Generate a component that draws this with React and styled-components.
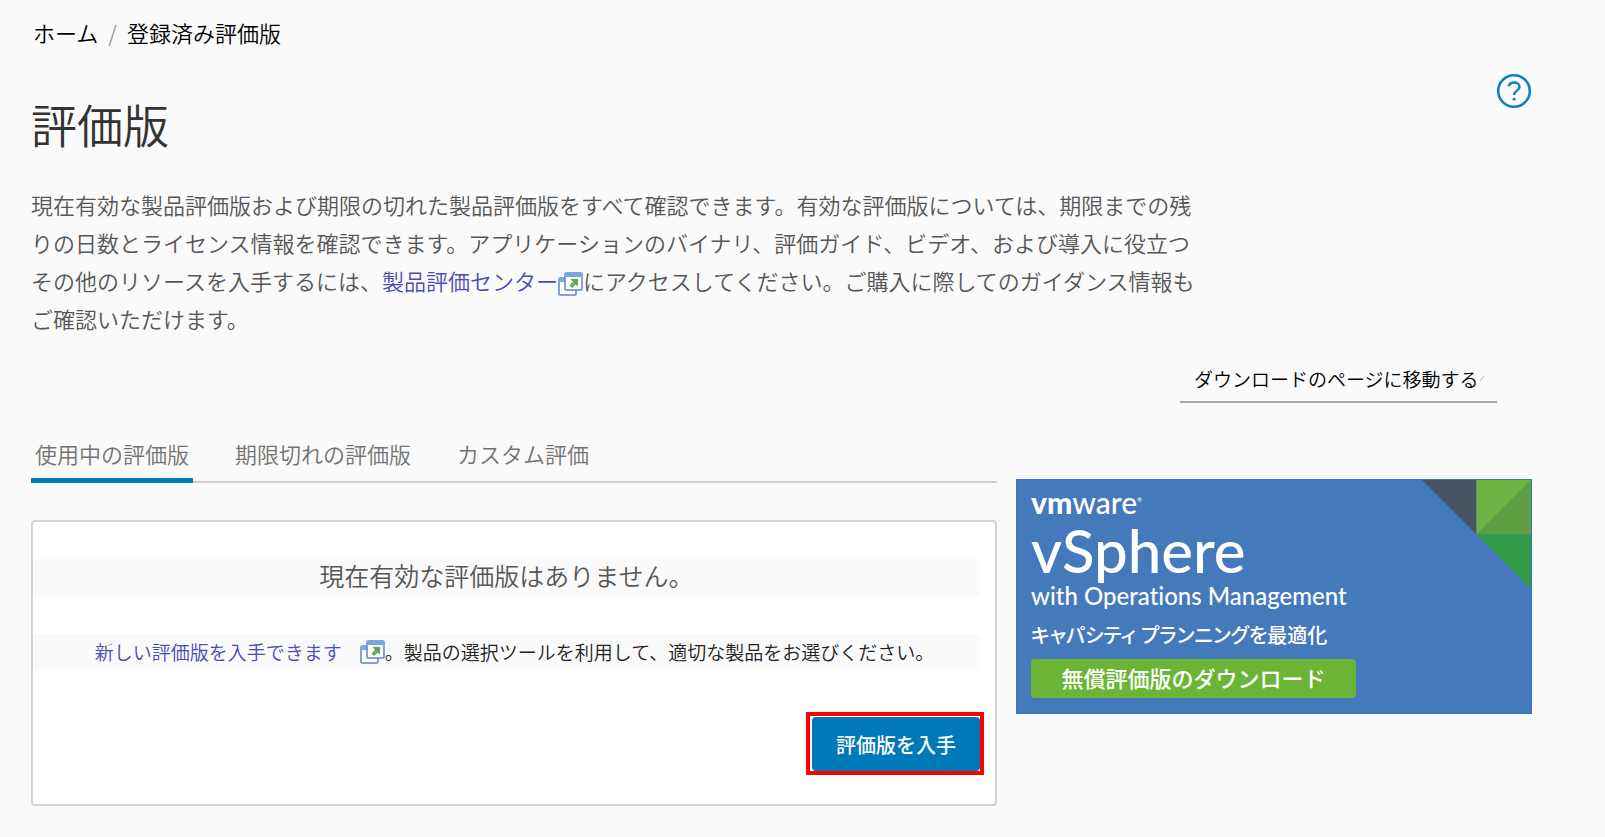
import { useState } from 'react'
import styled, { createGlobalStyle } from 'styled-components'

const tabs = ['使用中の評価版', '期限切れの評価版', 'カスタム評価']

const PopupIcon = () => (
  <PopupSvg viewBox="0 0 25 24" aria-hidden="true">
    <rect x="1" y="6" width="17" height="17" rx="1" fill="#fff" stroke="#5b87c5" strokeWidth="1.5" />
    <rect x="1" y="6" width="17" height="4" fill="#7fa9e0" />
    <rect x="7" y="1" width="17" height="17" rx="1" fill="#fff" stroke="#5b87c5" strokeWidth="1.5" />
    <rect x="7" y="1" width="17" height="4" fill="#78a6e2" />
    <path d="M12.500 7h7.500v7.500l-2.300-2-3.700 3.500-2.500-2.500 3.500-3.700z" fill="#5aa850" />
    <path d="M13.500 13.500l3-3" stroke="#8fca84" strokeWidth="1" />
  </PopupSvg>
)

const HelpIcon = () => (
  <svg width="36" height="36" viewBox="0 0 36 36" fill="none" stroke="#0f82bd">
    <circle cx="18" cy="18" r="15.800" strokeWidth="2.600" />
    <path d="M12.500 13.200c1-2.600 3-3.700 5.500-3.700 3.200 0 5.500 1.700 5.500 4.400 0 3.800-5.300 3.700-5.300 7.600v.5" strokeWidth="2.400" />
    <path d="M16.700 26.200h2.800" strokeWidth="2.600" />
  </svg>
)

const BannerCorner = () => (
  <CornerSvg viewBox="0 0 110 110" aria-hidden="true">
    <path d="M0 0h55v55z" fill="#475461" />
    <path d="M55 0h55l-55 55z" fill="#6db444" />
    <path d="M110 0v55h-55z" fill="#5f9e43" />
    <path d="M55 55h55v55z" fill="#319b47" />
  </CornerSvg>
)

export default function App() {
  const [activeTab, setActiveTab] = useState(0)

  return (
    <Page lang="ja">
      <GlobalStyle />
      <Breadcrumb aria-label="パンくず">
        <a href="#home">ホーム</a>
        <span>/</span>
        <a href="#evals">登録済み評価版</a>
      </Breadcrumb>
      <TitleRow>
        <Title>評価版</Title>
        <HelpButton type="button" aria-label="ヘルプ">
          <HelpIcon />
        </HelpButton>
      </TitleRow>
      <Intro>
        現在有効な製品評価版および期限の切れた製品評価版をすべて確認できます。有効な評価版については、期限までの残りの日数とライセンス情報を確認できます。アプリケーションのバイナリ、評価ガイド、ビデオ、および導入に役立つその他のリソースを入手するには、<TextLink href="#center">製品評価センター<PopupIcon /></TextLink>にアクセスしてください。ご購入に際してのガイダンス情報もご確認いただけます。
      </Intro>
      <DownloadRow>
        <DownloadSelect aria-label="ダウンロード">
          <option>ダウンロードのページに移動する</option>
        </DownloadSelect>
        <svg width="10" height="8" viewBox="0 0 10 8" fill="none" stroke="#b5b5b5" aria-hidden="true">
          <path d="M5 6l4-5" />
        </svg>
      </DownloadRow>
      <Columns>
        <main>
          <TabList role="tablist">
            {tabs.map((tab, index) => (
              <Tab
                key={tab}
                type="button"
                role="tab"
                aria-selected={index === activeTab}
                $active={index === activeTab}
                onClick={() => setActiveTab(index)}
              >
                {tab}
              </Tab>
            ))}
          </TabList>
          <Card>
            <EmptyMessage>現在有効な評価版はありません。</EmptyMessage>
            <Hint>
              <TextLink href="#new">新しい評価版を入手できます</TextLink>
              <IconLink href="#new" aria-label="新しいウィンドウで開く"><PopupIcon /></IconLink>
              <span>。製品の選択ツールを利用して、適切な製品をお選びください。</span>
            </Hint>
            <Highlight>
              <PrimaryButton type="button">評価版を入手</PrimaryButton>
            </Highlight>
          </Card>
        </main>
        <Banner>
          <BannerCorner />
          <Brand><b>vm</b>ware<sup>®</sup></Brand>
          <Product>vSphere</Product>
          <Edition>with Operations Management</Edition>
          <Tagline>キャパシティ プランニングを最適化</Tagline>
          <BannerButton type="button">無償評価版のダウンロード</BannerButton>
        </Banner>
      </Columns>
    </Page>
  )
}

const GlobalStyle = createGlobalStyle`
  * {
    box-sizing: border-box;
  }

  body {
    margin: 0;
    background: #fafafa;
    font-family: 'Noto Sans CJK JP', sans-serif;
    font-weight: 350;
    color: #565656;
  }

  button, select {
    font: inherit;
    cursor: pointer;
  }

  a {
    color: inherit;
    text-decoration: none;
  }
`;

const Page = styled.div`
  padding: 14px 73px 30px 31px;
`;

const Breadcrumb = styled.nav`
  display: flex;
  gap: 10px;
  padding-left: 2px;
  font-size: 22px;
  line-height: 36px;
  color: #000;

  span {
    color: #999;
  }
`;

const TitleRow = styled.div`
  display: flex;
  justify-content: space-between;
  align-items: flex-start;
  margin-top: 23px;
`;

const Title = styled.h1`
  margin: 16px 0 0;
  font-size: 46px;
  line-height: 68px;
  font-weight: 350;
  color: #333;
`;

const HelpButton = styled.button`
  display: flex;
  padding: 0;
  border: none;
  background: none;
`;

const Intro = styled.p`
  max-width: 1180px;
  margin: 28px 0 0;
  font-size: 22px;
  line-height: 38px;
`;

const TextLink = styled.a`
  color: #4a4bb5;
`;

const PopupSvg = styled.svg`
  width: 25px;
  height: 24px;
  vertical-align: -6px;
`;

const DownloadRow = styled.div`
  display: flex;
  justify-content: flex-end;
  align-items: center;
  margin: 18px 35px 0 0;

  svg {
    margin-left: -22px;
    margin-right: 12px;
    pointer-events: none;
  }
`;

const DownloadSelect = styled.select`
  appearance: none;
  width: 317px;
  height: 48px;
  padding: 0 0 0 14px;
  border: none;
  border-bottom: 2px solid #a9a9a9;
  border-radius: 0;
  background: transparent;
  font-size: 19px;
  color: #000;
`;

const Columns = styled.div`
  display: grid;
  grid-template-columns: minmax(0, 1fr) 516px;
  gap: 19px;
  align-items: start;
  margin-top: 31px;
`;

const TabList = styled.div`
  display: flex;
  gap: 38px;
  border-bottom: 2px solid #d0d0d0;
`;

const Tab = styled.button`
  height: 49px;
  margin-bottom: -2px;
  padding: 0 4px 6px;
  border: none;
  border-bottom: 5px solid ${({ $active }) => ($active ? '#0079b8' : 'transparent')};
  background: none;
  font-size: 22px;
  color: #737373;
`;

const Card = styled.section`
  display: flex;
  flex-direction: column;
  margin-top: 37px;
  padding: 37px 15px 29px 0;
  border: 2px solid #d4d4d4;
  border-radius: 4px;
  background: #fff;
`;

const EmptyMessage = styled.p`
  margin: 0;
  padding-bottom: 6px;
  background: #fafafa;
  text-align: center;
  font-size: 25px;
  line-height: 32px;
`;

const Hint = styled.p`
  display: flex;
  justify-content: center;
  align-items: center;
  margin: 37px 0 0;
  padding-left: 16px;
  padding-bottom: 2px;
  background: #fafafa;
  font-size: 19px;
  line-height: 35px;
  color: #222;
`;

const IconLink = styled.a`
  display: flex;
  margin-left: 18px;
`;

const Highlight = styled.div`
  align-self: flex-end;
  margin: 41px -4px 0 0;
  padding: 1px 0 0 2px;
  border: 4px solid #fe0000;
`;

const PrimaryButton = styled.button`
  display: block;
  width: 168px;
  height: 54px;
  padding: 0;
  border: none;
  border-radius: 4px;
  background: #0079b8;
  font-size: 20px;
  font-weight: 500;
  color: #fff;
`;

const Banner = styled.aside`
  position: relative;
  display: flex;
  flex-direction: column;
  align-items: flex-start;
  margin-top: 45px;
  padding: 8px 15px 15px 14px;
  border: 1px solid #3b74b8;
  background: #447abb;
  font-family: Lato, 'Noto Sans CJK JP', sans-serif;
  font-weight: 500;
  color: #fff;
`;

const CornerSvg = styled.svg`
  position: absolute;
  top: 0;
  right: 0;
  width: 109px;
`;

const Brand = styled.div`
  font-size: 30px;
  line-height: 28px;

  b {
    font-weight: 900;
  }

  sup {
    font-size: 6px;
    line-height: 8px;
    vertical-align: 12px;
  }
`;

const Product = styled.div`
  font-size: 60px;
  line-height: 68px;
`;

const Edition = styled.div`
  font-size: 24px;
  line-height: 24px;
  font-variant-ligatures: none;
`;

const Tagline = styled.div`
  margin-top: 13px;
  font-size: 20px;
  line-height: 28px;
  font-feature-settings: 'palt';
`;

const BannerButton = styled.button`
  width: 325px;
  height: 39px;
  margin-top: 10px;
  padding: 0;
  border: none;
  border-radius: 4px;
  background: #6bb536;
  font-size: 22px;
  line-height: 38px;
  color: #fff;
`;
